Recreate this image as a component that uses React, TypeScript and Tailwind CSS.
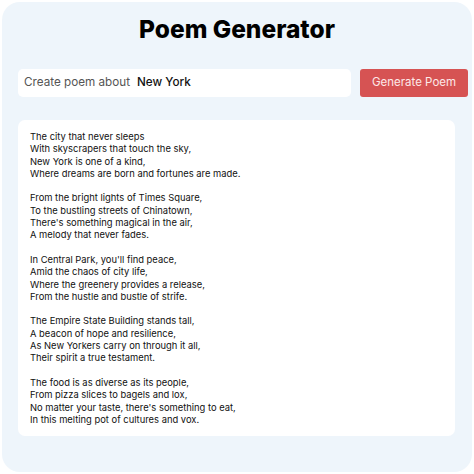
import React, { useState } from 'react';

const poem = [
  [
    'The city that never sleeps',
    'With skyscrapers that touch the sky,',
    'New York is one of a kind,',
    'Where dreams are born and fortunes are made.',
  ],
  [
    'From the bright lights of Times Square,',
    'To the bustling streets of Chinatown,',
    "There's something magical in the air,",
    'A melody that never fades.',
  ],
  [
    "In Central Park, you'll find peace,",
    'Amid the chaos of city life,',
    'Where the greenery provides a release,',
    'From the hustle and bustle of strife.',
  ],
  [
    'The Empire State Building stands tall,',
    'A beacon of hope and resilience,',
    'As New Yorkers carry on through it all,',
    'Their spirit a true testament.',
  ],
  [
    'The food is as diverse as its people,',
    'From pizza slices to bagels and lox,',
    "No matter your taste, there's something to eat,",
    'In this melting pot of cultures and vox.',
  ],
];

export default function App() {
  const [topic, setTopic] = useState('New York');

  return (
    <div
      className="w-[474px] h-[474px] bg-white p-[2px]"
      style={{ fontFamily: 'Inter, "Noto Sans", sans-serif' }}
    >
      <div className="h-[470px] rounded-[18px] bg-[#eef5fb] px-4 pt-[12px] flex flex-col">
        <h1 className="text-center text-[24.5px] leading-[30px] font-extrabold text-black">
          Poem Generator
        </h1>

        {/* Input row */}
        <div className="mt-[25px] -mr-[12px] flex gap-[9px]">
          <label className="flex-1 min-w-0 h-[28px] bg-white rounded-[5px] flex items-center px-[6px] text-[11.7px] whitespace-nowrap">
            <span className="text-[#555]">Create poem about</span>
            <input
              value={topic}
              onChange={(e) => setTopic(e.target.value)}
              className="ml-[7px] w-0 flex-1 outline-none text-[#111] font-medium bg-transparent"
            />
          </label>
          <button className="w-[108px] h-[28px] shrink-0 rounded-[3px] bg-[#d65353] text-[#fde8e8] text-[11.5px] whitespace-nowrap">
            Generate Poem
          </button>
        </div>

        {/* Poem */}
        <div className="mt-[23px] w-[437px] bg-white rounded-[7px] px-[12px] pt-[11px] pb-[10px] text-[9.4px] leading-[12.3px] text-[#111]">
          {poem.map((stanza, i) => (
            <p key={i} className={i > 0 ? 'mt-[12.3px]' : ''}>
              {stanza.map((line, j) => (
                <span key={j} className="block">
                  {line}
                </span>
              ))}
            </p>
          ))}
        </div>
      </div>
    </div>
  );
}
